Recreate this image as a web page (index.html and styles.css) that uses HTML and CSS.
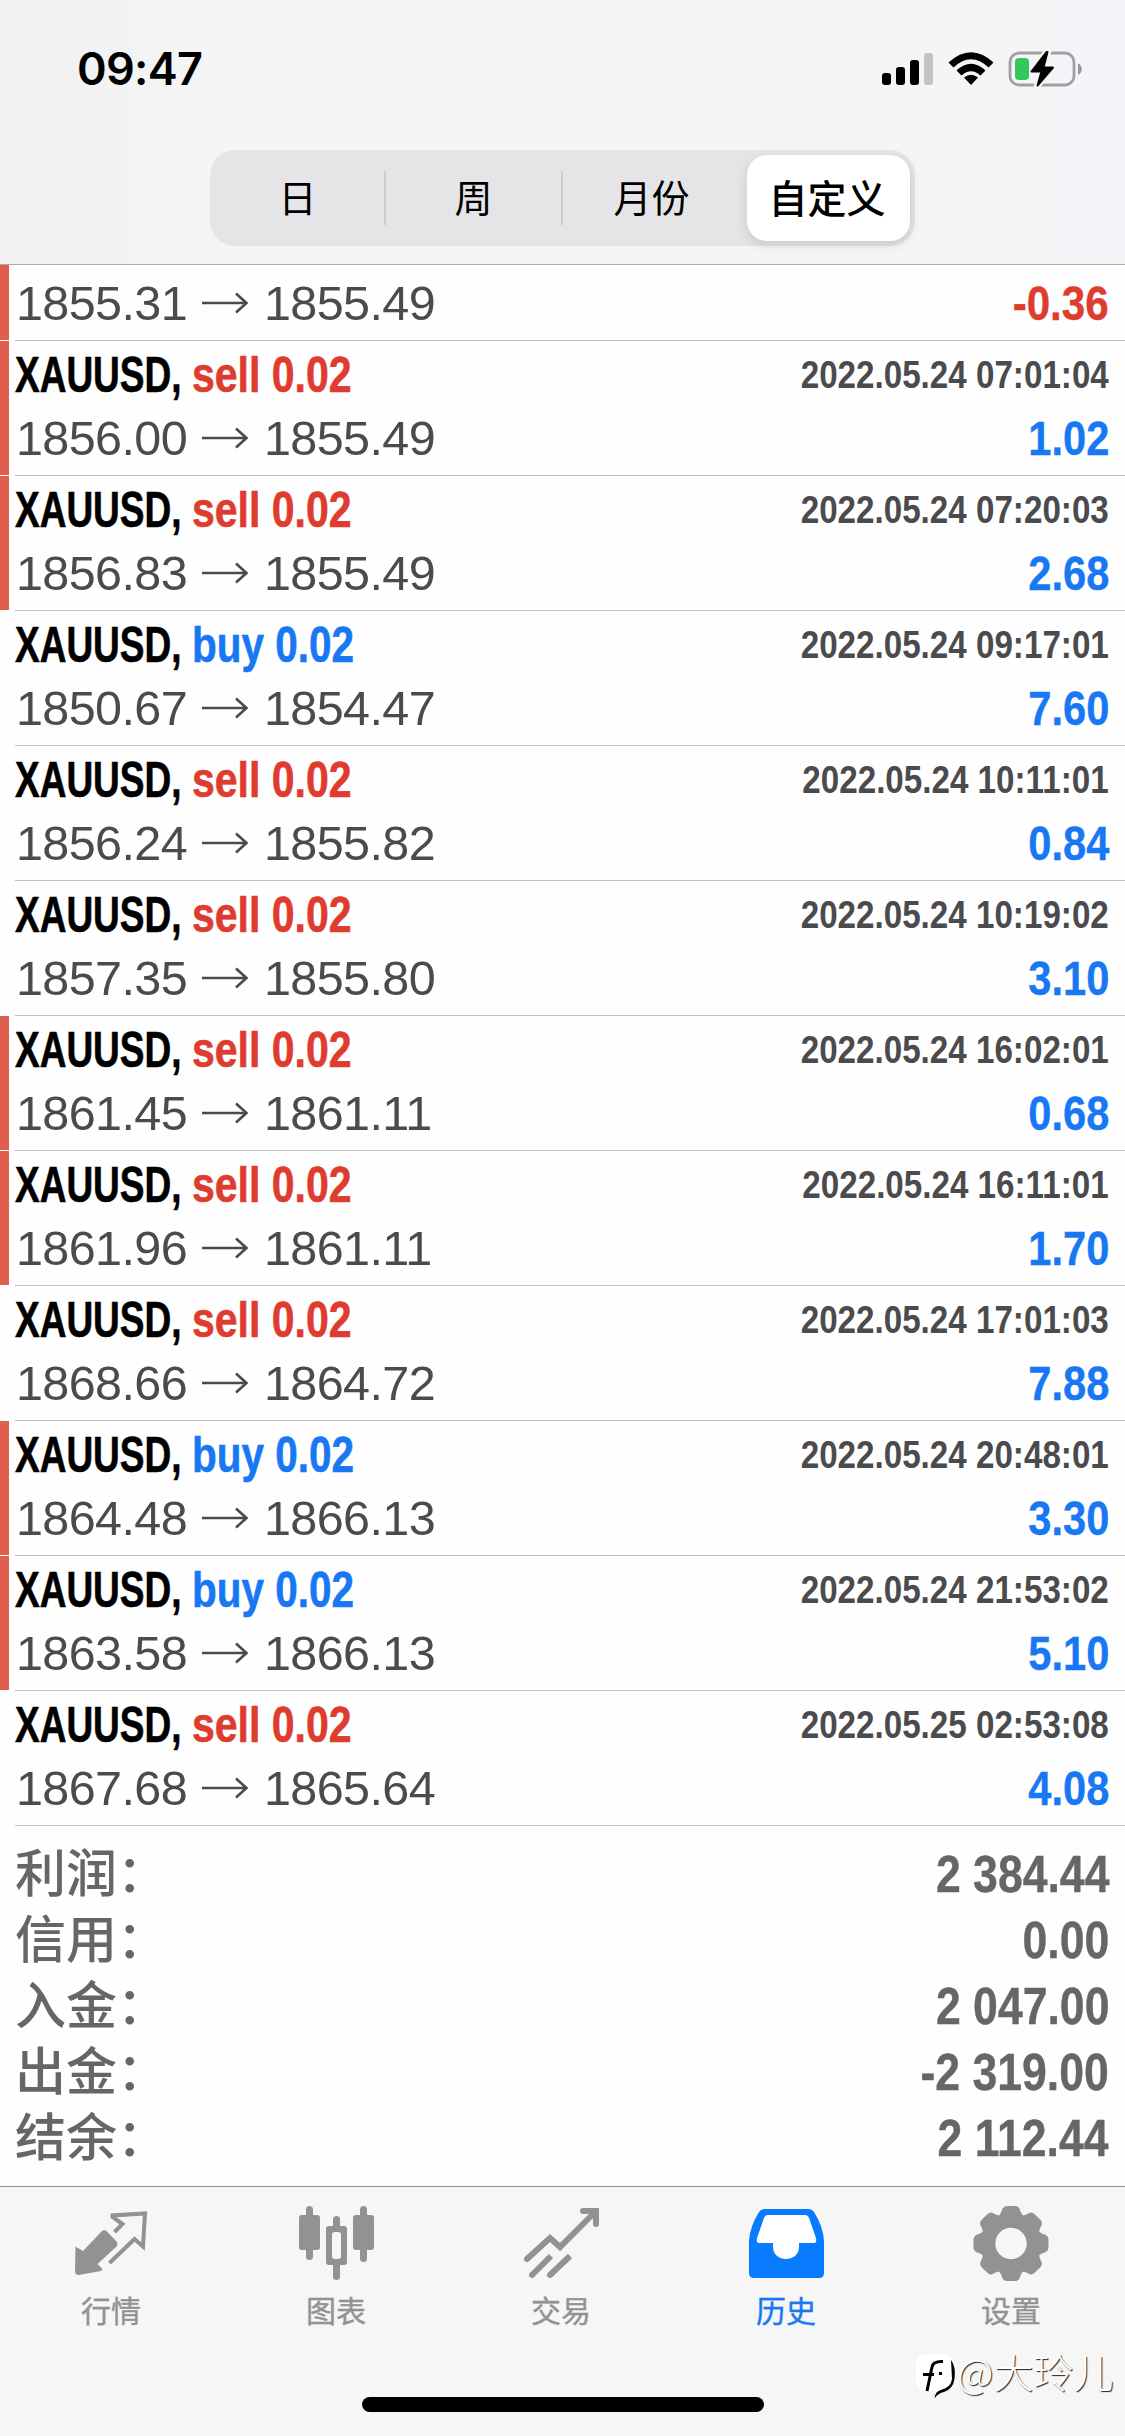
FILE: index.html
```html
<!DOCTYPE html>
<html lang="zh-CN">
<head>
<meta charset="utf-8">
<title>历史</title>
<link rel="stylesheet" href="styles.css">
</head>
<body>
<div class="screen">
  <header class="header">
    <div class="status">
      <span class="clock">09:47</span>
      <svg class="status-icons" width="210" height="50" viewBox="880 45 210 50">
        <rect x="882" y="73" width="9" height="12" rx="3"/>
        <rect x="896" y="67" width="9" height="18" rx="3"/>
        <rect x="910" y="60" width="9" height="25" rx="3"/>
        <rect x="924" y="53" width="9" height="32" rx="3" fill="#c3c3c5"/>
        <path d="M948.500 62.500Q971 42 993.500 62.500L988.500 67.500Q971 51 953.500 67.500Z"/>
        <path d="M956.500 70.500Q971 57 985.500 70.500L980.500 75.500Q971 67 961.500 75.500Z"/>
        <path d="M964 77.500Q971 72 978 77.500L971 85Z"/>
        <rect x="1010" y="53" width="64" height="32" rx="9" fill="none" stroke="#a0a0a2" stroke-width="2.800"/>
        <path d="M1078 63.500C1083 65 1083 73 1078 75Z" fill="#98989a"/>
        <path d="M1047 51L1030.500 72H1041L1036.500 87L1053.500 67H1043.500L1048.500 51Z" stroke="#f5f5f7" stroke-width="6"/>
        <rect x="1015" y="58" width="14" height="22" rx="4" fill="#34c759"/>
        <path d="M1046.500 52L1031.500 71.500H1041.500L1037.500 85.500L1053 67.500H1043.500L1047.500 52Z" stroke="#000" stroke-width="2" stroke-linejoin="round"/>
      </svg>
    </div>
    <nav class="segments">
      <span class="seg seg-day">日</span>
      <span class="seg seg-week">周</span>
      <span class="seg seg-month">月份</span>
      <span class="seg seg-custom">自定义</span>
    </nav>
  </header>

  <main class="deals" id="deals"></main>

  <section class="summary">
    <div class="total"><span>利润：</span><b>2 384.44</b></div>
    <div class="total"><span>信用：</span><b>0.00</b></div>
    <div class="total"><span>入金：</span><b>2 047.00</b></div>
    <div class="total"><span>出金：</span><b>-2 319.00</b></div>
    <div class="total"><span>结余：</span><b>2 112.44</b></div>
  </section>

  <footer class="tabbar">
    <div class="tab">
      <svg width="90" height="90" viewBox="66 2200 90 90">
        <path d="M75.500 2246.500L83 2251L101.500 2231.500Q104 2229 107 2231.500L116.500 2241.500Q118.500 2244 116.500 2246.500L97.500 2264L102.500 2269Q102 2271 98 2271.500L79 2275Q75 2275 75 2271Z"/>
        <path d="M114.500 2232L122.500 2224L112.500 2217V2215.500L145 2213.500L143 2246.500L134.500 2239L109.500 2263" fill="none" stroke="#929292" stroke-width="4"/>
      </svg>
      <span>行情</span>
    </div>
    <div class="tab">
      <svg width="90" height="90" viewBox="291 2200 90 90">
        <rect x="299" y="2215" width="21" height="35" rx="3"/><rect x="306" y="2206" width="7" height="54" rx="3.500"/>
        <rect x="353" y="2215" width="21" height="35" rx="3"/><rect x="360" y="2206" width="7" height="56" rx="3.500"/>
        <rect x="326" y="2226" width="21" height="39" rx="3"/><rect x="333" y="2216" width="7" height="64" rx="3.500"/>
        <rect x="332" y="2232" width="9" height="27" rx="3" fill="#f6f6f6"/>
      </svg>
      <span>图表</span>
    </div>
    <div class="tab">
      <svg width="90" height="90" viewBox="516 2200 90 90">
        <g fill="none" stroke="#929292" stroke-width="6">
          <path d="M527 2259L550 2238L560 2247L594 2213" stroke-linejoin="miter"/>
          <path d="M583 2211H596V2224" stroke-linecap="round"/>
          <path d="M527 2259l.1-.1M532 2275l.1-.1M550 2275l.1-.1" stroke-linecap="round"/>
          <path d="M532 2275L551 2256M550 2275L570 2256"/>
        </g>
      </svg>
      <span>交易</span>
    </div>
    <div class="tab active">
      <svg width="90" height="90" viewBox="741 2200 90 90">
        <path d="M764 2209H808Q812 2209 814 2212Q823 2226 824 2241V2273Q824 2278 819 2278H754Q749 2278 749 2273V2241Q750 2226 759 2212Q761 2209 764 2209Z"/>
        <path d="M768 2215H805Q808 2215 809 2218L816 2238Q817 2243 814 2243H799V2247C799 2263 773 2263 773 2247V2243H759Q756 2243 757 2238L764 2218Q765 2215 768 2215Z" fill="#fff"/>
      </svg>
      <span>历史</span>
    </div>
    <div class="tab">
      <svg width="90" height="90" viewBox="-45 -43.500 90 90">
        <circle r="29"/>
        <path id="tooth" d="M-14 -26Q-11 -28 -9.500 -32L-8.500 -35Q-7 -37.500 -4 -37.500H4Q7 -37.500 8.500 -35L9.500 -32Q11 -28 14 -26V0H-14Z"/>
        <use href="#tooth" transform="rotate(45)"/><use href="#tooth" transform="rotate(90)"/><use href="#tooth" transform="rotate(135)"/>
        <use href="#tooth" transform="rotate(180)"/><use href="#tooth" transform="rotate(225)"/><use href="#tooth" transform="rotate(270)"/><use href="#tooth" transform="rotate(315)"/>
        <circle r="15.700" fill="#f6f6f6"/>
      </svg>
      <span>设置</span>
    </div>
  </footer>
  <div class="home-bar"></div>
  <div class="watermark">
    <svg width="42" height="48" viewBox="0 0 42 48">
      <path d="M10 2H28Q39 3 39 14V26Q38 37 27 39Q24 40 20 45V39H10Q1 38 1 28V12Q2 3 10 2Z" fill="#fff"/>
      <path d="M36 8Q41 14 39.500 27Q38 37 29 40Q23 41 19.500 46.500Q20 39 27 37.500Q36 35 37 27Z"/>
      <path d="M28 9.500Q18 9 17 15L12 39M8 22.500H19M24 21.500H27" fill="none" stroke="#000" stroke-width="3"/>
    </svg>
    <span>@大玲儿</span>
  </div>
</div>
<script src="deals.js"></script>
</body>
</html>
```
FILE: styles.css
```css
* { box-sizing: border-box; }
body { margin: 0; background: #fff; }
.screen {
  position: relative;
  width: 1125px;
  height: 2436px;
  overflow: hidden;
  display: flex;
  flex-direction: column;
  background: #fefefe;
  font-family: "Liberation Sans", "Noto Sans CJK SC", sans-serif;
}
.header {
  height: 265px;
  flex: none;
  border-bottom: 1px solid #aaaaac;
  background: linear-gradient(90deg, #f2f0f1 0, #f5f5f6 210px, #f5f5f7 900px, #f4f5f8 100%);
}
.status {
  height: 150px;
  padding: 45px 35px 0 77px;
  display: flex;
  justify-content: space-between;
}
.clock { font: 600 45px/48px Inter, sans-serif; letter-spacing: -.7px; }
.status-icons { display: block; }
.segments {
  width: 705px;
  height: 96px;
  margin-left: 210px;
  padding: 5px;
  display: flex;
  align-items: center;
  border-radius: 25px;
  background: #e5e5e7;
  font: 400 38px/50px "Noto Sans CJK SC", sans-serif;
}
.seg { height: 54px; text-align: center; }
.seg-day { width: 171px; padding-right: 4px; border-right: 2px solid #cdcdd0; }
.seg-week { width: 177px; border-right: 2px solid #cdcdd0; }
.seg-month { width: 179px; padding-right: 2px; }
.seg-custom {
  width: 163px;
  height: 86px;
  margin-left: 5px;
  padding-right: 3px;
  line-height: 82px;
  border-radius: 20px;
  background: #fff;
  font-weight: 500;
  font-size: 39px;
  box-shadow: 0 4px 12px rgba(0, 0, 0, .13);
}
.deals { flex: none; }
.deal {
  height: 135px;
  display: flex;
  justify-content: space-between;
  position: relative;
  padding: 0 16px 0 15px;
}
.deal::after {
  content: "";
  position: absolute;
  left: 15px;
  right: 0;
  bottom: 0;
  height: 1px;
  background: #c0c0c2;
}
.deal.marked::before {
  content: "";
  position: absolute;
  left: 0;
  top: 0;
  bottom: 1px;
  width: 9px;
  background: #e05e4e;
}
.deal.partial { height: 76px; }
.left, .right { display: flex; flex-direction: column; flex: none; padding-top: 6px; }
.partial .left { padding-top: 10px; }
.partial .right { padding-top: 10px; }
.right { align-items: flex-end; }
.title {
  height: 63px;
  font-weight: 700;
  font-size: 50px;
  line-height: 57px;
  display: flex;
  white-space: nowrap;
  -webkit-text-stroke: .6px currentColor;
}
.symbol { display: block; width: 177px; transform: scaleX(.74); transform-origin: 0 0; color: #000; }
.side { display: block; transform: scaleX(.82); transform-origin: 0 0; }
.side.buy { transform: scaleX(.81); }
.sell { color: #de3c2f; }
.buy { color: #1878f3; }
.prices {
  display: flex;
  align-items: center;
  height: 56px;
  padding-left: 1px;
  font-size: 48.5px;
  line-height: 56px;
  letter-spacing: -.6px;
  color: #4b4b4d;
}
.prices > span { width: 171px; }
.prices svg { margin: 0 15px 0 14px; }
.time {
  height: 63px;
  font-weight: 700;
  font-size: 39.5px;
  line-height: 54px;
  color: #4b4b4d;
  transform: scaleX(.84);
  transform-origin: 100% 0;
  white-space: nowrap;
}
.profit {
  font-weight: 700;
  font-size: 49px;
  line-height: 56px;
  color: #1878f3;
  transform: scaleX(.85);
  transform-origin: 100% 0;
  -webkit-text-stroke: .4px currentColor;
}
.profit.loss { color: #de3c2f; transform: scaleX(.86); }
.summary { flex: none; height: 360px; padding: 15px 16px 0 15px; color: #666; }
.total { height: 66px; display: flex; justify-content: space-between; }
.total span { height: 59px; font: 500 51px/59px "Noto Sans CJK SC", sans-serif; }
.total b { font-size: 52px; line-height: 66px; transform: scaleX(.857); transform-origin: 100% 0; -webkit-text-stroke: .4px currentColor; }
.tabbar {
  height: 250px;
  flex: none;
  display: grid;
  grid-template-columns: repeat(5, 225px);
  border-top: 1px solid #8e8e8e;
  background: #f6f6f6;
}
.tab { display: flex; flex-direction: column; align-items: center; padding: 13px 3px 0 0; color: #929292; }
.tab svg { display: block; fill: #929292; }
.tab span { font: 400 30px/39px "Noto Sans CJK SC", sans-serif; -webkit-text-stroke: .4px currentColor; }
.tab.active { color: #1878f3; }
.tab.active svg { fill: #087bfe; }
.home-bar {
  position: absolute;
  left: 362px;
  top: 2397px;
  width: 402px;
  height: 15px;
  border-radius: 8px;
  background: #000;
}
.watermark {
  position: absolute;
  left: 915px;
  top: 2352px;
  display: flex;
  color: #fff;
  font: 300 40px/38px "Noto Sans CJK SC", sans-serif;
  text-shadow: 1px 1px 1px #222;
}
```
FILE: deals.js
```js
const deals = [
  ["", "", "", "1855.31", "1855.49", "-0.36", 1],
  ["sell", "0.02", "2022.05.24 07:01:04", "1856.00", "1855.49", "1.02", 1],
  ["sell", "0.02", "2022.05.24 07:20:03", "1856.83", "1855.49", "2.68", 1],
  ["buy", "0.02", "2022.05.24 09:17:01", "1850.67", "1854.47", "7.60", 0],
  ["sell", "0.02", "2022.05.24 10:11:01", "1856.24", "1855.82", "0.84", 0],
  ["sell", "0.02", "2022.05.24 10:19:02", "1857.35", "1855.80", "3.10", 0],
  ["sell", "0.02", "2022.05.24 16:02:01", "1861.45", "1861.11", "0.68", 1],
  ["sell", "0.02", "2022.05.24 16:11:01", "1861.96", "1861.11", "1.70", 1],
  ["sell", "0.02", "2022.05.24 17:01:03", "1868.66", "1864.72", "7.88", 0],
  ["buy", "0.02", "2022.05.24 20:48:01", "1864.48", "1866.13", "3.30", 1],
  ["buy", "0.02", "2022.05.24 21:53:02", "1863.58", "1866.13", "5.10", 1],
  ["sell", "0.02", "2022.05.25 02:53:08", "1867.68", "1865.64", "4.08", 0]
];
const arrow = '<svg width="48" height="24" viewBox="0 0 48 24" fill="none" stroke="#4b4b4d" stroke-width="2.6"><path d="M1 12H45M35 2.500L45.500 12L35 21.500"/></svg>';
document.getElementById("deals").innerHTML = deals.map(([side, lots, time, open, close, profit, marked]) => `
  <article class="deal${marked ? " marked" : ""}${side ? "" : " partial"}">
    <div class="left">
      ${side ? `<div class="title"><span class="symbol">XAUUSD,</span><span class="side ${side}">${side} ${lots}</span></div>` : ""}
      <div class="prices"><span>${open}</span>${arrow}<span>${close}</span></div>
    </div>
    <div class="right">
      ${side ? `<div class="time">${time}</div>` : ""}
      <div class="profit${profit < 0 ? " loss" : ""}">${profit}</div>
    </div>
  </article>`).join("");
```
